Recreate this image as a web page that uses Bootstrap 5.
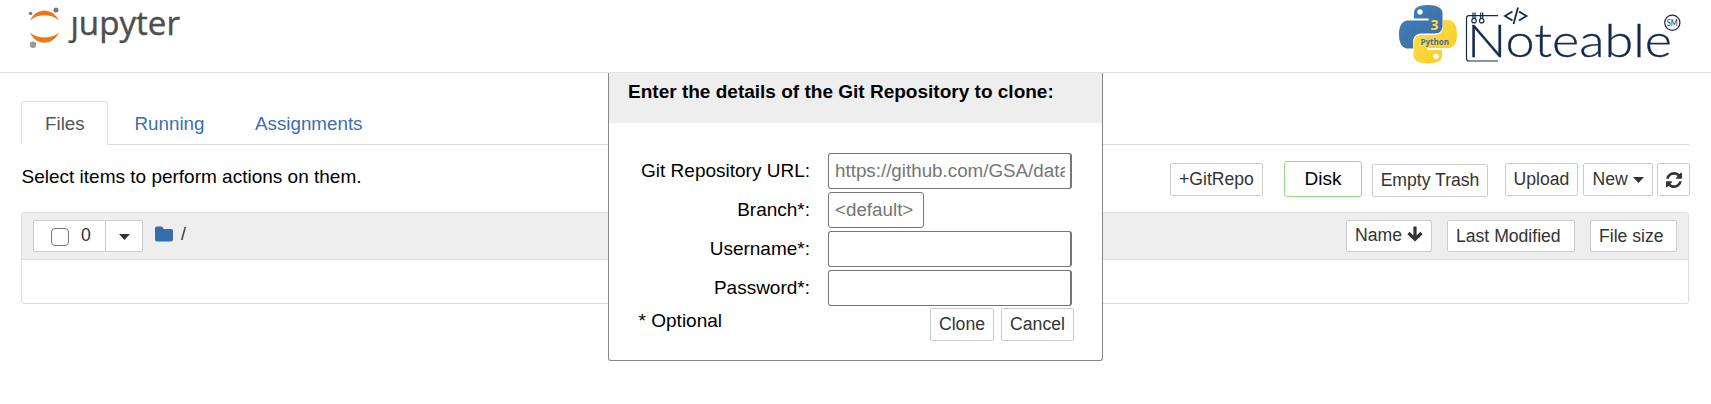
<!DOCTYPE html>
<html lang="en">
<head>
<meta charset="utf-8">
<title>Jupyter - Files</title>
<link href="https://cdn.jsdelivr.net/npm/bootstrap@5.3.0/dist/css/bootstrap.min.css" rel="stylesheet">
<style>
body{font-family:"Liberation Sans",Arial,sans-serif;font-size:19px;line-height:26px;color:#000;background:#fff;height:404px;overflow:hidden}
.top-bar{height:73px;border-bottom:1px solid #e4e4e4;padding:0 30px 0 28px}
.brand-jupyter{margin-top:5px;overflow:visible}
.page-body{padding:28px 22px 0 21px}
.nav-tabs{height:44px;border-color:#ddd;font-size:18.8px}
.nav-tabs .nav-link{height:44px;padding:9px 23px 0;line-height:26px;border-radius:3px 3px 0 0;color:#3a6fb0}
.nav-tabs .nav-link.active{color:#555;border-color:#ddd #ddd #fff;width:87px}
.nav-tabs .nav-item+.nav-item{margin-left:2.5px}
.toolbar-row{height:67px;padding-top:18px}
.select-hint{padding:1px 0 0 .5px}
.btn-nb{--bs-btn-color:#333;--bs-btn-bg:#fff;--bs-btn-border-color:#ccc;--bs-btn-border-radius:2px;--bs-btn-padding-x:0;--bs-btn-padding-y:0;--bs-btn-font-size:17.6px;--bs-btn-line-height:29px;height:33px;white-space:nowrap}
.btn-sort{height:32px;--bs-btn-line-height:28px;text-align:left;--bs-btn-padding-x:8px}
.disk-box{width:78px;height:36px;border:1px solid #8fdd85;border-radius:3px;line-height:33px;margin:-2px 10px 0 21px}
.toolbar-actions{margin-right:-1px}
.w-git{width:93px}.w-trash{width:116px;margin:1px 17px 0 0}.w-upload{width:73px;margin-right:5px}.w-new{width:70px;margin-right:4px}.w-refresh{width:33px}
.sort-group{gap:15px}
.w-name{width:86px}.w-mod{width:128px}.w-size{width:87px}
.file-list{height:92px;border:1px solid #ddd;border-radius:3px}
.file-head{height:47px;background:#eee;border-bottom:1px solid #ddd;padding:0 11px 0 11px;font-size:17.6px}
.btn-group .w-check{width:73px;--bs-btn-line-height:27px;padding-bottom:2px}.btn-group .w-drop{width:38px}
.nb-check{width:18px;height:18px;border:1.5px solid #767676;border-radius:4px;margin:4px 12px 0 3px}
.crumbs{margin:-5px 0 0 12px;color:#333}
.clone-dialog{position:absolute;left:608px;top:73px;width:495px;height:288px;background:#fff;border:1px solid #888;border-top:0;border-radius:0 0 3px 3px}
.dialog-title{height:50px;background:#eee;padding:6px 0 0 19px;font-weight:700;white-space:nowrap;font-size:19.03px}
.dialog-form{padding:30px 28px 0 28px}
.form-line{height:39px}
.form-line label{width:173px;margin-right:18px;text-align:right;white-space:nowrap;padding-top:5px}
.form-line .form-control{width:244px;height:36px;padding:0 5px 0 6px;font-size:18.8px;border:1px solid #767676;border-right-width:2px;border-radius:3px;color:#000}
.form-line .form-control::placeholder{color:#757575}
.form-line .branch-input{width:96px;border-right-width:1px}
.dialog-actions{margin-top:-1px}
.w-clone{width:64px;margin-right:7px}.w-cancel{width:73px}
</style>
</head>
<body>
<header class="top-bar d-flex justify-content-between">
  <svg class="brand-jupyter" width="156" height="50" viewBox="28 5 156 50">
    <path d="M30 20.6C36 7 52.500 7 59 20.600C51.500 13.500 37.500 13.500 30 20.600ZM30 32.500C36 46.200 52.500 46.200 59 32.500C51.500 39.300 37.500 39.300 30 32.500Z" fill="#ec7814"/>
    <circle cx="30.500" cy="13.400" r="1.700" fill="#777"/><circle cx="56" cy="10" r="2.500" fill="#777"/><circle cx="33" cy="44.800" r="3.200" fill="#999"/>
    <text x="70.500" y="35.300" textLength="109.500" lengthAdjust="spacingAndGlyphs" font-family="Open Sans,sans-serif" font-size="32" fill="#4e4e4e" stroke="#4e4e4e" stroke-width=".4">jupyter</text>
    <path d="M67 5h13.500v11.600H67z" fill="#fff"/>
  </svg>
  <svg width="284" height="70" viewBox="1397 0 284 70">
    <defs>
      <linearGradient id="pyBlue" x1="0" y1="0" x2="1" y2="1"><stop stop-color="#4381bb"/><stop offset="1" stop-color="#396b9e"/></linearGradient>
      <linearGradient id="pyGold" x1="1" y1="1" x2="0" y2="0"><stop stop-color="#ffe052"/><stop offset="1" stop-color="#fbc91f"/></linearGradient>
      <path id="snake" d="M29 0C19 0 15 3 15 8V13.500H29.500V15.500H9C3 15.500 0 21 0 29C0 38 3 43 8 43.500H14V37C14 31 18 28.500 23 28.500H36C41 28.500 43.500 25 43.500 21V8C43.500 3 38 0 29 0Z"/>
    </defs>
    <use href="#snake" transform="translate(1399 5)" fill="url(#pyBlue)"/>
    <use href="#snake" transform="translate(1457 63.500) rotate(180)" fill="url(#pyGold)"/>
    <circle cx="1420" cy="12" r="2.700" fill="#fff"/><circle cx="1436" cy="56.500" r="2.700" fill="#fff"/>
    <text x="1430.500" y="29.500" font-family="Open Sans,sans-serif" font-weight="700" font-size="14" fill="#ffdb3c">3</text>
    <text x="1420.500" y="45" textLength="28.500" lengthAdjust="spacingAndGlyphs" font-family="Open Sans,sans-serif" font-weight="700" font-size="9" fill="#39709f">Python</text>
    <g fill="none" stroke="#14294b" stroke-width="1.200">
      <path d="M1498 15.600H1469Q1466.500 15.600 1466.500 18V58.500Q1466.500 61 1469 61H1498"/>
      <path d="M1473 12.500V19M1475 12.500V19M1480.700 12.500V19M1482.700 12.500V19"/>
      <circle cx="1474" cy="20.700" r="2.200"/><circle cx="1481.700" cy="20.700" r="2.200"/>
      <path stroke-width="1.800" d="M1512.500 11.500L1505 16L1512.500 20.500M1519 11.500L1526.500 16L1519 20.500M1518 7.500L1513.500 24"/>
      <circle cx="1672.300" cy="22.800" r="7.600"/>
    </g>
    <text x="1467" y="57.300" textLength="205" lengthAdjust="spacingAndGlyphs" font-family="Lato,sans-serif" font-weight="300" font-size="44.500" fill="#14294b" stroke="#14294b" stroke-width=".3">Noteable</text>
    <text x="1666.800" y="26" textLength="11" lengthAdjust="spacingAndGlyphs" font-family="Lato,sans-serif" font-size="8.500" fill="#14294b">SM</text>
  </svg>
</header>

<main class="page-body">
  <ul class="nav nav-tabs flex-nowrap">
    <li class="nav-item"><a class="nav-link active" href="#">Files</a></li>
    <li class="nav-item"><a class="nav-link" href="#">Running</a></li>
    <li class="nav-item"><a class="nav-link" href="#">Assignments</a></li>
  </ul>
  <div class="toolbar-row d-flex justify-content-between">
    <div class="select-hint">Select items to perform actions on them.</div>
    <div class="toolbar-actions d-flex align-items-start">
      <button class="btn btn-nb w-git">+GitRepo</button>
      <div class="disk-box text-center">Disk</div>
      <button class="btn btn-nb w-trash">Empty Trash</button>
      <button class="btn btn-nb w-upload">Upload</button>
      <button class="btn btn-nb w-new">New <svg width="11" height="7" viewBox="0 0 11 7"><path d="M0 0h11L5.500 6z" fill="#333"/></svg></button>
      <button class="btn btn-nb w-refresh" aria-label="Refresh"><svg class="d-block mx-auto" width="16" height="16" viewBox="0 0 1536 1536"><path fill="#333" d="M1511 928q0 5-1 7-64 268-268 434.500T764 1536q-146 0-282.500-55T238 1324l-129 129q-19 19-45 19t-45-19-19-45V960q0-26 19-45t45-19h448q26 0 45 19t19 45-19 45l-137 137q71 66 161 102t187 36q134 0 250-65t186-179q11-17 53-117 8-23 30-23h192q13 0 22.500 9.500t9.500 22.500zm25-800v448q0 26-19 45t-45 19h-448q-26 0-45-19t-19-45 19-45l138-138Q969 256 768 256q-134 0-250 65T332 500q-11 17-53 117-8 23-30 23H50q-13 0-22.500-9.500T18 608v-7q65-268 270-434.500T768 0q146 0 284 55.500T1297 212l130-129q19-19 45-19t45 19 19 45z"/></svg></button>
    </div>
  </div>
  <div class="file-list">
    <div class="file-head d-flex align-items-center">
      <div class="btn-group">
        <button class="btn btn-nb btn-sort w-check d-flex align-items-center justify-content-center ps-2"><span class="nb-check"></span>0</button>
        <button class="btn btn-nb btn-sort w-drop text-center" aria-label="Select"><svg width="11" height="7" viewBox="0 0 11 7"><path d="M0 0h11L5.500 6z" fill="#333"/></svg></button>
      </div>
      <div class="crumbs d-flex align-items-center"><svg width="18" height="16" viewBox="0 0 18 16"><path d="M2 .5h4.500Q8 .5 8.500 3H16Q18 3 18 5V13.500Q18 15.500 16 15.500H2Q0 15.500 0 13.500V2.500Q0 .5 2 .5Z" fill="#376dac"/></svg><span class="ms-2">/</span></div>
      <div class="sort-group d-flex ms-auto">
        <button class="btn btn-nb btn-sort w-name d-flex justify-content-between">Name <svg class="mt-1" width="16" height="17" viewBox="0 0 16 17"><path d="M8 1.500V14M1.500 8L8 14.300L14.500 8" fill="none" stroke="#333" stroke-width="3.200"/></svg></button>
        <button class="btn btn-nb btn-sort w-mod">Last Modified</button>
        <button class="btn btn-nb btn-sort w-size">File size</button>
      </div>
    </div>
  </div>
</main>

<section class="clone-dialog">
  <div class="dialog-title">Enter the details of the Git Repository to clone:</div>
  <form class="dialog-form">
    <div class="form-line d-flex"><label for="url">Git Repository URL:</label><input id="url" class="form-control" placeholder="https://github.com/GSA/data-strategy.git"></div>
    <div class="form-line d-flex"><label for="branch">Branch*:</label><input id="branch" class="form-control branch-input" placeholder="&lt;default&gt;"></div>
    <div class="form-line d-flex"><label for="user">Username*:</label><input id="user" class="form-control"></div>
    <div class="form-line d-flex"><label for="pass">Password*:</label><input id="pass" type="password" class="form-control"></div>
    <div class="dialog-actions d-flex align-items-start"><span class="me-auto">&#8202;* Optional</span><button type="button" class="btn btn-nb w-clone">Clone</button><button type="button" class="btn btn-nb w-cancel">Cancel</button></div>
  </form>
</section>
<script src="https://cdn.jsdelivr.net/npm/bootstrap@5.3.0/dist/js/bootstrap.bundle.min.js"></script>
</body>
</html>
